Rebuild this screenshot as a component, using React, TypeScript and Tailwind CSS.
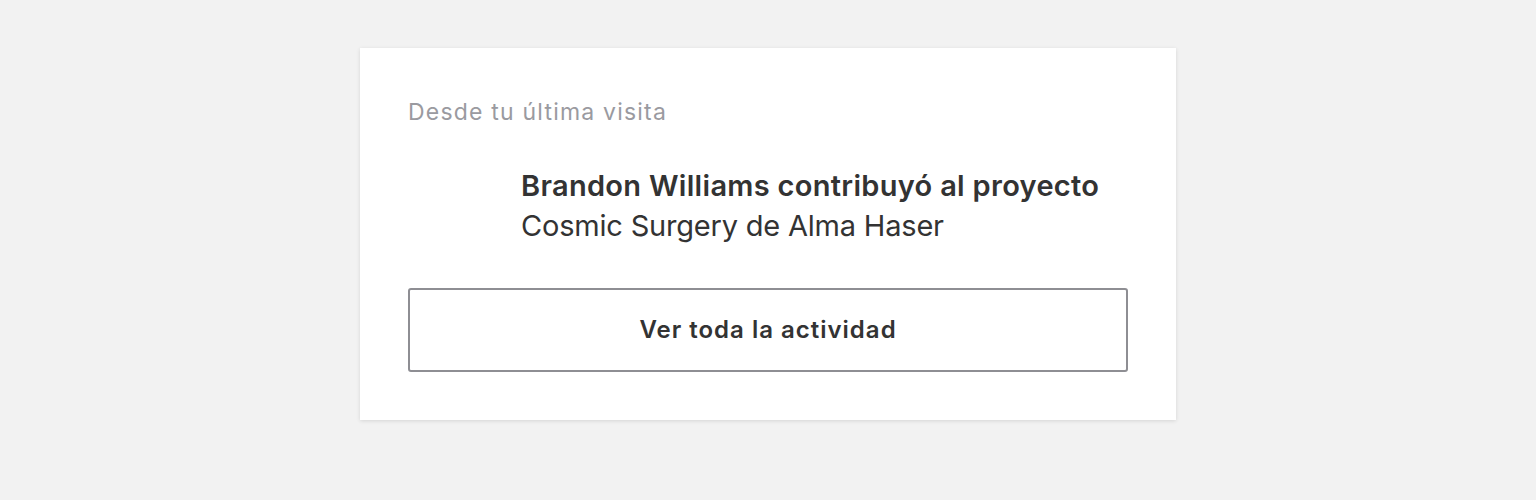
export default function App() {
  return (
    <div className="min-h-[500px] w-full bg-[#f2f2f2] flex justify-center pt-[48px]" style={{ fontFamily: 'Inter, "Noto Sans", sans-serif' }}>
      <div className="w-[816px] h-[372px] bg-white shadow-[0_1px_4px_rgba(0,0,0,0.12)] px-[48px] pt-[48px] flex flex-col">
        <div className="text-[23px] leading-[32px] tracking-[1.2px] text-[#9a9aa0]">Desde tu última visita</div>
        <div className="pl-[113px] mt-[38px] text-[29px] leading-[40px] text-[#333333]">
          <div className="font-semibold tracking-[0.3px]">Brandon Williams contribuyó al proyecto</div>
          <div className="tracking-[-0.2px]">Cosmic Surgery de Alma Haser</div>
        </div>
        <button className="mt-[42px] h-[84px] w-full border-2 border-[#8e8e93] rounded-[3px] flex items-center justify-center text-[24px] tracking-[1px] font-semibold text-[#333333]">
          Ver toda la actividad
        </button>
      </div>
    </div>
  );
}
